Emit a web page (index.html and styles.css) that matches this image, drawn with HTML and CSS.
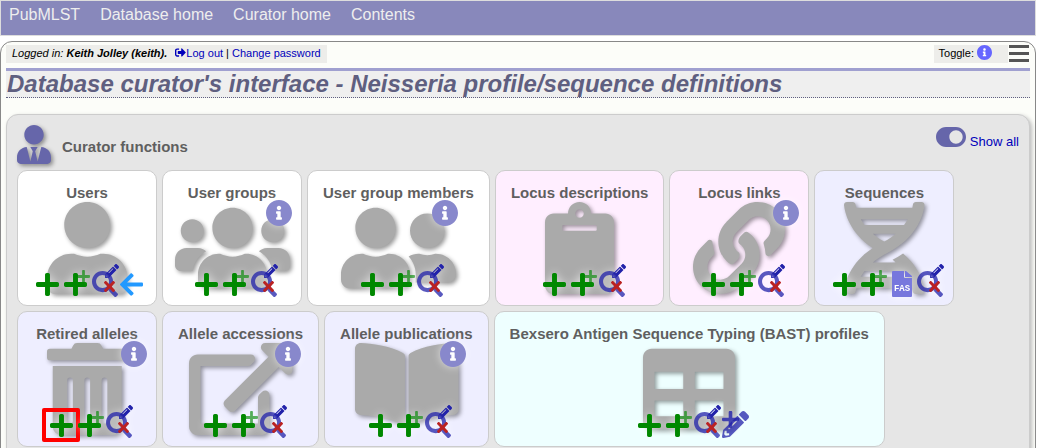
FILE: index.html
```html
<!DOCTYPE html>
<html lang="en">
<head>
<meta charset="utf-8">
<title>Curator's interface - Neisseria profile/sequence definitions</title>
<link rel="stylesheet" href="styles.css">
</head>
<body>
<svg class="sprite" aria-hidden="true">
  <symbol id="plus" viewBox="0 32 448 448"><path d="M416 208H272V64c0-17.67-14.33-32-32-32h-32c-17.67 0-32 14.33-32 32v144H32c-17.67 0-32 14.33-32 32v32c0 17.67 14.33 32 32 32h144v144c0 17.67 14.33 32 32 32h32c17.67 0 32-14.33 32-32V304h144c17.67 0 32-14.33 32-32v-32c0-17.67-14.33-32-32-32z"/></symbol>
  <symbol id="search" viewBox="0 0 512 512"><path d="M505 442.7L405.3 343c-4.5-4.5-10.6-7-17-7H372c27.6-35.3 44-79.7 44-128C416 93.1 322.9 0 208 0S0 93.1 0 208s93.1 208 208 208c48.3 0 92.7-16.4 128-44v16.3c0 6.4 2.5 12.5 7 17l99.7 99.7c9.4 9.4 24.6 9.4 33.9 0l28.3-28.3c9.4-9.4 9.4-24.6.1-34zM208 336c-70.7 0-128-57.2-128-128 0-70.7 57.2-128 128-128 70.7 0 128 57.2 128 128 0 70.7-57.2 128-128 128z"/></symbol>
  <symbol id="pencil" viewBox="0 0 512 512"><path d="M497.9 142.1l-46.1 46.1c-4.7 4.7-12.3 4.7-17 0l-111-111c-4.7-4.7-4.7-12.3 0-17l46.1-46.1c18.7-18.7 49.1-18.7 67.9 0l60.1 60.1c18.8 18.7 18.8 49.1 0 67.9zM284.2 99.8L21.6 362.4.4 483.9c-2.9 16.4 11.4 30.6 27.8 27.8l121.5-21.3 262.6-262.6c4.7-4.7 4.7-12.3 0-17l-111-111c-4.8-4.7-12.4-4.7-17.1 0zM124.1 339.9c-5.5-5.5-5.5-14.3 0-19.8l154-154c5.5-5.5 14.3-5.5 19.8 0s5.5 14.3 0 19.8l-154 154c-5.5 5.5-14.3 5.5-19.8 0zM88 424h48v36.3l-64.5 11.3-31.1-31.1L51.7 376H88v48z"/></symbol>
  <symbol id="times" viewBox="0 80 352 352"><path d="M242.72 256l100.07-100.07c12.28-12.28 12.28-32.19 0-44.48l-22.24-22.24c-12.28-12.28-32.19-12.28-44.48 0L176 189.28 75.93 89.21c-12.28-12.28-32.19-12.28-44.48 0L9.21 111.45c-12.28 12.28-12.28 32.19 0 44.48L109.28 256 9.21 356.07c-12.28 12.28-12.28 32.19 0 44.48l22.24 22.24c12.28 12.28 32.2 12.28 44.48 0L176 322.72l100.07 100.07c12.28 12.28 32.2 12.28 44.48 0l22.24-22.24c12.28-12.28 12.28-32.19 0-44.48L242.72 256z"/></symbol>
  <symbol id="arrow" viewBox="0 32 448 448"><path d="M257.5 445.1l-22.2 22.2c-9.4 9.4-24.6 9.4-33.9 0L7 273c-9.4-9.4-9.4-24.6 0-33.9L201.4 44.7c9.4-9.4 24.6-9.4 33.9 0l22.2 22.2c9.5 9.5 9.3 25-.4 34.3L136.6 216H424c13.3 0 24 10.7 24 24v32c0 13.3-10.7 24-24 24H136.6l120.5 114.8c9.8 9.3 10 24.8.4 34.3z"/></symbol>
  <symbol id="info" viewBox="8 8 496 496"><circle cx="256" cy="256" r="200" fill="#fff"/><path d="M256 8C119.043 8 8 119.083 8 256c0 136.997 111.043 248 248 248s248-111.003 248-248C504 119.083 392.957 8 256 8zm0 110c23.196 0 42 18.804 42 42s-18.804 42-42 42-42-18.804-42-42 18.804-42 42-42zm56 254c0 6.627-5.373 12-12 12h-88c-6.627 0-12-5.373-12-12v-24c0-6.627 5.373-12 12-12h12v-64h-12c-6.627 0-12-5.373-12-12v-24c0-6.627 5.373-12 12-12h64c6.627 0 12 5.373 12 12v100h12c6.627 0 12 5.373 12 12v24z"/></symbol>

  <symbol id="a-add" viewBox="0 0 28 34"><use href="#plus" x="0" y="10" width="23" height="23" fill="#080"/></symbol>
  <symbol id="a-batch" viewBox="0 0 28 34"><use href="#plus" x="13" y="7" width="13" height="13" fill="#080" opacity=".65"/><use href="#plus" x="0" y="10" width="23" height="23" fill="#080"/></symbol>
  <symbol id="a-query" viewBox="0 0 28 34"><use href="#search" x="0" y="8" width="26" height="26" fill="#22a" opacity=".75"/><use href="#pencil" x="13" y="1" width="14" height="14" fill="#22a"/><use href="#times" x="12" y="18" width="11" height="11" fill="#b22"/></symbol>
  <symbol id="a-import" viewBox="0 0 28 34"><use href="#arrow" x="0" y="10" width="23" height="23" fill="#29f"/></symbol>
  <symbol id="a-edit" viewBox="0 0 28 34"><use href="#plus" x="0" y="7" width="17" height="17" fill="#22a" opacity=".8"/><use href="#pencil" x="0" y="7" width="27" height="27" fill="#22a" opacity=".75"/></symbol>
</svg>

<nav class="site-nav">
  <a href="#">PubMLST</a>
  <a href="#">Database home</a>
  <a href="#">Curator home</a>
  <a href="#">Contents</a>
</nav>

<main class="page">
  <div class="topbar">
    <p class="login"><i>Logged in: <b>Keith Jolley (keith).</b></i> <a class="logout" href="#"><svg class="logout-icon" viewBox="0 0 512 512" aria-hidden="true"><path d="M497 273L329 441c-15 15-41 4.5-41-17v-96H152c-13.300 0-24-10.700-24-24v-96c0-13.300 10.700-24 24-24h136V88c0-21.400 25.900-32 41-17l168 168c9.300 9.400 9.300 24.600 0 34zM192 436v-40c0-6.600-5.400-12-12-12H96c-17.700 0-32-14.300-32-32V160c0-17.700 14.300-32 32-32h84c6.600 0 12-5.400 12-12V76c0-6.600-5.400-12-12-12H96c-53 0-96 43-96 96v192c0 53 43 96 96 96h84c6.600 0 12-5.400 12-12z"/></svg>Log out</a> | <a href="#">Change password</a></p>
    <div class="tools">
      <div class="toggle-info">Toggle: <button type="button" aria-label="Toggle help"><svg viewBox="0 0 16 16"><use href="#info"/></svg></button></div>
      <button type="button" class="menu" aria-label="Menu"><svg viewBox="0 0 20 18"><path d="M0 0h20v3H0zM0 7h20v3H0zM0 14h20v3H0z"/></svg></button>
    </div>
  </div>

  <h1>Database curator's interface - Neisseria profile/sequence definitions</h1>

  <section class="panel">
    <header class="panel-head">
      <svg class="tie" viewBox="0 0 448 512" aria-hidden="true"><path d="M224 256c70.7 0 128-57.3 128-128S294.7 0 224 0 96 57.3 96 128s57.3 128 128 128zm95.8 32.6L272 480l-32-136 32-56h-96l32 56-32 136-47.8-191.4C56.9 292 0 350.3 0 422.4V464c0 26.5 21.5 48 48 48h352c26.5 0 48-21.5 48-48v-41.6c0-72.1-56.9-130.4-128.2-133.8z"/></svg>
      <h2>Curator functions</h2>
      <a class="show-all" href="#"><svg viewBox="0 64 576 384" aria-hidden="true"><path d="M384 64H192C86 64 0 150 0 256s86 192 192 192h192c106 0 192-86 192-192S490 64 384 64zm0 320c-70.8 0-128-57.3-128-128 0-70.8 57.3-128 128-128 70.8 0 128 57.3 128 128 0 70.8-57.3 128-128 128z"/></svg><span>Show all</span></a>
    </header>

    <div class="cards">
      <article class="card">
        <h3>Users</h3>
        <div class="stage">
          <svg class="art" viewBox="0 0 448 512"><path d="M224 256c70.7 0 128-57.3 128-128S294.7 0 224 0 96 57.3 96 128s57.3 128 128 128zm89.6 32h-16.7c-22.2 10.2-46.9 16-72.9 16s-50.6-5.8-72.9-16h-16.7C60.2 288 0 348.2 0 422.4V464c0 26.5 21.5 48 48 48h352c26.5 0 48-21.5 48-48v-41.6c0-74.2-60.2-134.4-134.4-134.4z"/></svg>
          <div class="actions">
            <a href="#" aria-label="Add"><svg><use href="#a-add"/></svg></a>
            <a href="#" aria-label="Batch add"><svg><use href="#a-batch"/></svg></a>
            <a href="#" aria-label="Update or delete"><svg><use href="#a-query"/></svg></a>
            <a href="#" aria-label="Import"><svg><use href="#a-import"/></svg></a>
          </div>
        </div>
      </article>

      <article class="card">
        <h3>User groups</h3>
        <div class="stage">
          <svg class="art" viewBox="0 0 640 512"><path d="M96 224c35.3 0 64-28.7 64-64s-28.7-64-64-64-64 28.7-64 64 28.7 64 64 64zm448 0c35.3 0 64-28.7 64-64s-28.7-64-64-64-64 28.7-64 64 28.7 64 64 64zm32 32h-64c-17.6 0-33.5 7.1-45.1 18.6 40.3 22.1 68.9 62 75.1 109.4h66c17.7 0 32-14.3 32-32v-32c0-35.3-28.7-64-64-64zm-256 0c61.9 0 112-50.1 112-112S381.9 32 320 32 208 82.1 208 144s50.1 112 112 112zm76.8 32h-8.3c-20.8 10-43.9 16-68.5 16s-47.6-6-68.5-16h-8.3C179.6 288 128 339.6 128 403.2V432c0 26.5 21.5 48 48 48h288c26.5 0 48-21.5 48-48v-28.8c0-63.6-51.6-115.2-115.2-115.2zm-223.7-13.4C161.5 263.1 145.6 256 128 256H64c-35.3 0-64 28.7-64 64v32c0 17.7 14.3 32 32 32h65.9c6.3-47.4 34.9-87.3 75.2-109.4z"/></svg>
          <button type="button" class="info" aria-label="About user groups"><svg><use href="#info"/></svg></button>
          <div class="actions">
            <a href="#" aria-label="Add"><svg><use href="#a-add"/></svg></a>
            <a href="#" aria-label="Batch add"><svg><use href="#a-batch"/></svg></a>
            <a href="#" aria-label="Update or delete"><svg><use href="#a-query"/></svg></a>
          </div>
        </div>
      </article>

      <article class="card">
        <h3>User group members</h3>
        <div class="stage">
          <svg class="art" viewBox="0 0 640 512"><path d="M192 256c61.9 0 112-50.1 112-112S253.9 32 192 32 80 82.1 80 144s50.1 112 112 112zm76.8 32h-8.3c-20.8 10-43.9 16-68.5 16s-47.6-6-68.5-16h-8.3C51.6 288 0 339.6 0 403.2V432c0 26.5 21.5 48 48 48h288c26.5 0 48-21.5 48-48v-28.8c0-63.6-51.6-115.2-115.2-115.2zM480 256c53 0 96-43 96-96s-43-96-96-96-96 43-96 96 43 96 96 96zm48 32h-3.8c-13.9 4.8-28.6 8-44.2 8s-30.3-3.2-44.2-8H432c-20.4 0-39.2 5.9-55.7 15.4 24.4 26.3 39.7 61.2 39.7 99.8v38.4c0 2.2-.5 4.3-.6 6.4H592c26.5 0 48-21.5 48-48 0-61.9-50.1-112-112-112z"/></svg>
          <button type="button" class="info" aria-label="About user group members"><svg><use href="#info"/></svg></button>
          <div class="actions">
            <a href="#" aria-label="Add"><svg><use href="#a-add"/></svg></a>
            <a href="#" aria-label="Batch add"><svg><use href="#a-batch"/></svg></a>
            <a href="#" aria-label="Update or delete"><svg><use href="#a-query"/></svg></a>
          </div>
        </div>
      </article>

      <article class="card locus">
        <h3>Locus descriptions</h3>
        <div class="stage">
          <svg class="art" viewBox="0 0 384 512"><path d="M384 112v352c0 26.51-21.49 48-48 48H48c-26.51 0-48-21.49-48-48V112c0-26.51 21.49-48 48-48h80c0-35.29 28.71-64 64-64s64 28.71 64 64h80c26.51 0 48 21.49 48 48zM192 40c-13.255 0-24 10.745-24 24s10.745 24 24 24 24-10.745 24-24-10.745-24-24-24m96 114v-20a6 6 0 0 0-6-6H102a6 6 0 0 0-6 6v20a6 6 0 0 0 6 6h180a6 6 0 0 0 6-6z"/></svg>
          <div class="actions">
            <a href="#" aria-label="Add"><svg><use href="#a-add"/></svg></a>
            <a href="#" aria-label="Batch add"><svg><use href="#a-batch"/></svg></a>
            <a href="#" aria-label="Update or delete"><svg><use href="#a-query"/></svg></a>
          </div>
        </div>
      </article>

      <article class="card locus">
        <h3>Locus links</h3>
        <div class="stage">
          <svg class="art" viewBox="0 0 512 512"><path d="M326.612 185.391c59.747 59.809 58.927 155.698.36 214.59-.11.12-.24.25-.36.37l-67.2 67.2c-59.27 59.27-155.699 59.262-214.96 0-59.27-59.26-59.27-155.7 0-214.96l37.106-37.106c9.84-9.84 26.786-3.3 27.294 10.606.648 17.722 3.826 35.527 9.69 52.721 1.986 5.822.567 12.262-3.783 16.612l-13.087 13.087c-28.026 28.026-28.905 73.66-1.155 101.96 28.024 28.579 74.086 28.749 102.325.51l67.2-67.19c28.191-28.191 28.073-73.757 0-101.83-3.701-3.694-7.429-6.564-10.341-8.569a16.037 16.037 0 0 1-6.947-12.606c-.396-10.567 3.348-21.456 11.698-29.806l21.054-21.055c5.521-5.521 14.182-6.199 20.584-1.731a152.482 152.482 0 0 1 20.522 17.197zM467.547 44.449c-59.261-59.262-155.69-59.27-214.96 0l-67.2 67.2c-.12.12-.25.25-.36.37-58.566 58.892-59.387 154.781.36 214.59a152.454 152.454 0 0 0 20.521 17.196c6.402 4.468 15.064 3.789 20.584-1.731l21.054-21.055c8.35-8.35 12.094-19.239 11.698-29.806a16.037 16.037 0 0 0-6.947-12.606c-2.912-2.005-6.64-4.875-10.341-8.569-28.073-28.073-28.191-73.639 0-101.83l67.2-67.19c28.239-28.239 74.3-28.069 102.325.51 27.75 28.3 26.872 73.934-1.155 101.96l-13.087 13.087c-4.35 4.35-5.769 10.79-3.783 16.612 5.864 17.194 9.042 34.999 9.69 52.721.509 13.906 17.454 20.446 27.294 10.606l37.106-37.106c59.271-59.259 59.271-155.699.001-214.959z"/></svg>
          <button type="button" class="info" aria-label="About locus links"><svg><use href="#info"/></svg></button>
          <div class="actions">
            <a href="#" aria-label="Add"><svg><use href="#a-add"/></svg></a>
            <a href="#" aria-label="Batch add"><svg><use href="#a-batch"/></svg></a>
            <a href="#" aria-label="Update or delete"><svg><use href="#a-query"/></svg></a>
          </div>
        </div>
      </article>

      <article class="card allele">
        <h3>Sequences</h3>
        <div class="stage">
          <svg class="art" viewBox="0 0 448 512"><path d="M.1 494.1c-1.1 9.5 6.3 17.8 15.9 17.8l32.3.1c8.1 0 14.9-5.9 16-13.9.7-4.9 1.8-11.1 3.4-18.1H380c1.6 6.9 2.9 13.2 3.5 18.1 1.1 8 7.9 14 16 13.9l32.3-.1c9.6 0 17.1-8.3 15.9-17.8-4.6-37.9-25.6-129-118.9-207.7-17.6 12.4-37.1 24.2-58.5 35.4 6.2 4.6 11.4 9.4 17 14.2H159.7c21.3-18.1 47-35.6 78.7-51.4C410.5 199.1 442.1 65.8 447.9 17.9 449 8.4 441.6.1 432 .1L399.6 0c-8.1 0-14.9 5.9-16 13.9-.7 4.9-1.8 11.1-3.4 18.1H67.8c-1.6-7-2.7-13.1-3.4-18.1-1.1-8-7.9-14-16-13.9L16.1.1C6.5.1-1 8.400.1 17.900 5.300 60.800 31.400 171.800 160 256 31.500 340.200 5.300 451.200.1 494.100zM224 219.600c-25.100-13.700-46.400-28.400-64.300-43.600h128.500c-17.800 15.200-39.100 30-64.200 43.600zM355.100 96c-5.800 10.400-12.800 21.100-21 32H114c-8.300-10.900-15.300-21.600-21-32h262.100zM92.900 416c5.800-10.400 12.800-21.100 21-32h219.400c8.300 10.900 15.400 21.600 21.200 32H92.900z"/></svg>
          <div class="actions">
            <a href="#" aria-label="Add"><svg><use href="#a-add"/></svg></a>
            <a href="#" aria-label="Batch add"><svg><use href="#a-batch"/></svg></a>
            <a href="#" aria-label="Upload FASTA"><svg viewBox="0 0 28 34"><path fill="#77d" d="M4 8h11v6q0 1 1 1h7v18q0 1-1 1H4q-1 0-1-1V9q0-1 1-1zM16 8h1l6 5v1h-7z"/><text class="fas" x="13" y="28">FAS</text></svg></a>
            <a href="#" aria-label="Update or delete"><svg><use href="#a-query"/></svg></a>
          </div>
        </div>
      </article>

      <article class="card allele">
        <h3>Retired alleles</h3>
        <div class="stage">
          <svg class="art" viewBox="0 0 448 512"><path d="M32 464a48 48 0 0 0 48 48h288a48 48 0 0 0 48-48V128H32zm272-256a16 16 0 0 1 32 0v224a16 16 0 0 1-32 0zm-96 0a16 16 0 0 1 32 0v224a16 16 0 0 1-32 0zm-96 0a16 16 0 0 1 32 0v224a16 16 0 0 1-32 0zM432 32H312l-9.4-18.7A24 24 0 0 0 281.1 0H166.8a23.72 23.72 0 0 0-21.4 13.3L136 32H16A16 16 0 0 0 0 48v32a16 16 0 0 0 16 16h416a16 16 0 0 0 16-16V48a16 16 0 0 0-16-16z"/></svg>
          <button type="button" class="info" aria-label="About retired alleles"><svg><use href="#info"/></svg></button>
          <div class="actions">
            <a href="#" class="marked" aria-label="Add"><svg><use href="#a-add"/></svg></a>
            <a href="#" aria-label="Batch add"><svg><use href="#a-batch"/></svg></a>
            <a href="#" aria-label="Update or delete"><svg><use href="#a-query"/></svg></a>
          </div>
        </div>
      </article>

      <article class="card allele">
        <h3>Allele accessions</h3>
        <div class="stage">
          <svg class="art" viewBox="0 0 576 512"><path d="M576 24v127.984c0 21.461-25.96 31.98-40.971 16.971l-35.707-35.709-243.523 243.523c-9.373 9.373-24.568 9.373-33.941 0l-22.627-22.627c-9.373-9.373-9.373-24.569 0-33.941L442.756 76.676l-35.703-35.705C391.982 25.9 402.656 0 424.024 0H552c13.255 0 24 10.745 24 24zM407.029 270.794l-16 16A23.999 23.999 0 0 0 384 303.765V448H64V128h264a24.003 24.003 0 0 0 16.97-7.029l16-16C376.089 89.851 365.381 64 344 64H48C21.49 64 0 85.49 0 112v352c0 26.51 21.49 48 48 48h352c26.51 0 48-21.49 48-48V287.764c0-21.382-25.852-32.09-40.971-16.97z"/></svg>
          <button type="button" class="info" aria-label="About allele accessions"><svg><use href="#info"/></svg></button>
          <div class="actions">
            <a href="#" aria-label="Add"><svg><use href="#a-add"/></svg></a>
            <a href="#" aria-label="Batch add"><svg><use href="#a-batch"/></svg></a>
            <a href="#" aria-label="Update or delete"><svg><use href="#a-query"/></svg></a>
          </div>
        </div>
      </article>

      <article class="card allele">
        <h3>Allele publications</h3>
        <div class="stage">
          <svg class="art" viewBox="0 0 576 512"><path d="M542 0C487 3 378 14 309 56q-11 6-11 14v364c0 12 19 19 29 13 69-34 169-44 219-47 17-1 30-14 30-30V31C576 13 561-1 542 0zM267 56C198 14 89 3 34 0 15-1 0 13 0 31v338c0 16 13 30 30 31 50 3 150 12 219 47 10 6 29-1 29-13V70q0-8-11-14z"/></svg>
          <button type="button" class="info" aria-label="About allele publications"><svg><use href="#info"/></svg></button>
          <div class="actions">
            <a href="#" aria-label="Add"><svg><use href="#a-add"/></svg></a>
            <a href="#" aria-label="Batch add"><svg><use href="#a-batch"/></svg></a>
            <a href="#" aria-label="Update or delete"><svg><use href="#a-query"/></svg></a>
          </div>
        </div>
      </article>

      <article class="card scheme">
        <h3>Bexsero Antigen Sequence Typing (BAST) profiles</h3>
        <div class="stage">
          <svg class="art" viewBox="0 0 512 512"><path d="M464 32H48C21.49 32 0 53.49 0 80v352c0 26.51 21.49 48 48 48h416c26.51 0 48-21.49 48-48V80c0-26.51-21.49-48-48-48zM224 408H64v-88h160v88zm0-152H64v-96h160v96zm224 152H288v-88h160v88zm0-152H288v-96h160v96z"/></svg>
          <div class="actions">
            <a href="#" aria-label="Add"><svg><use href="#a-add"/></svg></a>
            <a href="#" aria-label="Batch add"><svg><use href="#a-batch"/></svg></a>
            <a href="#" aria-label="Update or delete"><svg><use href="#a-query"/></svg></a>
            <a href="#" aria-label="Batch update"><svg><use href="#a-edit"/></svg></a>
          </div>
        </div>
      </article>
    </div>
  </section>
</main>
</body>
</html>
```
FILE: styles.css
```css
*, *::after { box-sizing: border-box; }

body {
  margin: 0 3px 0 0;
  background: #fff;
  font-family: "Liberation Sans", Arial, sans-serif;
  color: #000;
}

a { color: #00b; text-decoration: none; }
h1, h2, h3, p { margin: 0; }
button { border: 0; padding: 0; background: none; font: inherit; cursor: pointer; }
svg { display: block; }
.sprite { position: absolute; width: 0; height: 0; }

.site-nav {
  display: flex;
  gap: 20px;
  padding: 4px 8px 10px;
  border: 1px solid #ddd;
  background: #88b;
  font-size: 16px;
  line-height: 20px;
}
.site-nav a { color: #eee; }

.page {
  margin-top: 5px;
  padding: 3px 5px 16px;
  border: 1px solid #888;
  border-radius: 12px;
  background: #fcfdf9;
}

.topbar {
  display: flex;
  justify-content: space-between;
  font-size: 11px;
  line-height: 17px;
}
.login { padding: 0 6px; background: #ededea; }
.logout { margin-left: 5px; }
.logout-icon {
  display: inline-block;
  width: 11px;
  height: 11px;
  vertical-align: -1px;
  fill: #00b;
}
.tools { display: flex; gap: 1px; }
.toggle-info {
  display: flex;
  align-items: flex-start;
  gap: 3px;
  padding: 0 16px 0 5px;
  background: #ededea;
}
.toggle-info svg { width: 15px; height: 15px; fill: #66f; }
.menu { padding-right: 1px; }
.menu svg { width: 20px; height: 18px; fill: #555; }

h1 {
  margin-top: 5px;
  padding-left: 1px;
  border-top: 3px solid #a0a0d0;
  border-bottom: 1px dotted #5f5f80;
  background: #efefef;
  color: #5f5f80;
  font-size: 24px;
  font-style: italic;
  line-height: 26px;
}

.panel {
  margin-top: 16px;
  padding: 10px 10px 16px;
  border: 1px solid #ccc;
  border-radius: 12px;
  background: #e6e6e6;
  box-shadow: 2px 2px 4px #bbb;
}
.panel-head {
  display: flex;
  align-items: flex-start;
  height: 45px;
}
.tie {
  width: 34px;
  height: 39px;
  fill: #66a;
  filter: drop-shadow(2px 2px 2px rgba(0, 0, 0, .4));
}
h2 {
  margin: 12px auto 0 11px;
  color: #5f5f5f;
  font-size: 15px;
  line-height: 20px;
}
.show-all {
  display: flex;
  gap: 4px;
  padding-top: 2px;
  font-size: 13px;
  line-height: 30px;
}
.show-all svg { width: 30px; height: 20px; fill: #66a; }
.show-all path { stroke: none; }

.cards { display: flex; flex-wrap: wrap; gap: 5px; }
.card {
  display: flex;
  flex-direction: column;
  align-items: center;
  min-width: 140px;
  padding: 13px 15px 10px;
  border: 1px solid #ccc;
  border-radius: 10px;
  background: #fff;
}
.locus { background: #fef; }
.allele { background: #eef; }
.scheme { background: #eff; }
h3 {
  color: #5f5f5f;
  font-size: 15px;
  line-height: 18px;
}
.stage {
  position: relative;
  display: flex;
  justify-content: center;
  width: 120px;
  height: 93px;
  margin: 0 -8px;
}
.art {
  height: 92px;
  fill: #aaa;
  overflow: visible;
  filter: drop-shadow(2px 2px 2px rgba(0, 0, 0, .4));
}
.info { position: absolute; top: -2px; right: 0; }
.info svg {
  width: 26px;
  height: 26px;
  fill: #88c;
  filter: drop-shadow(0 0 4px rgba(255, 255, 255, .6));
}
.actions {
  position: absolute;
  bottom: -2px;
  left: 4px;
  right: -6px;
  display: flex;
  justify-content: center;
}
.actions a { position: relative; }
.actions svg {
  width: 28px;
  height: 34px;
  overflow: visible;
  filter: drop-shadow(0 0 4px rgba(255, 255, 255, .7));
}
.fas {
  fill: #fff;
  font: bold 9px "Liberation Mono", monospace;
  text-anchor: middle;
}
.marked::after {
  content: "";
  position: absolute;
  left: -8px;
  top: 4px;
  width: 38px;
  height: 34px;
  border: 4px solid #f00;
  border-radius: 2px;
}
```
